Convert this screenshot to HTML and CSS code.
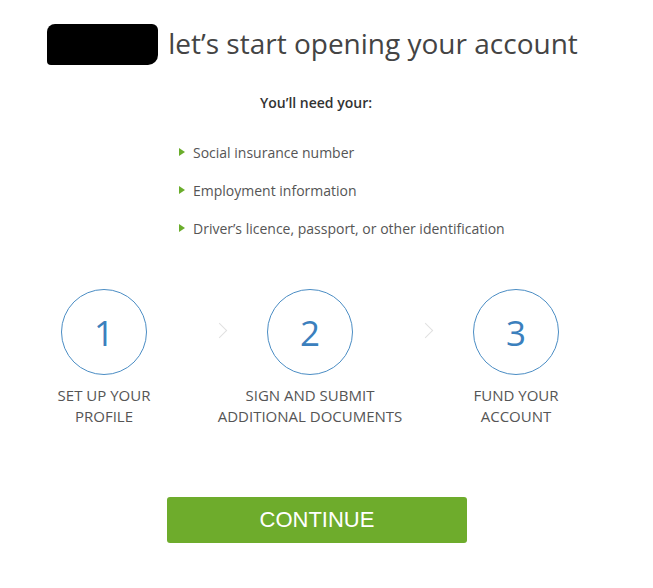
FILE: index.html
```html
<!DOCTYPE html>
<html lang="en">
<head>
  <meta charset="UTF-8" />
  <title>Open your account</title>
  <link rel="stylesheet" href="styles.css">
</head>
<body>

<div class="page">
  <h1 class="title"><span class="redact"></span>let’s start opening your account</h1>

  <p class="intro">You’ll need your:</p>

  <ul class="needs">
    <li>Social insurance number</li>
    <li>Employment information</li>
    <li>Driver’s licence, passport, or other identification</li>
  </ul>

  <div class="steps">
    <div class="step">
      <div class="circle">1</div>
      <div class="label">SET UP YOUR<br>PROFILE</div>
    </div>
    <div class="step">
      <div class="circle">2</div>
      <div class="label">SIGN AND SUBMIT<br>ADDITIONAL DOCUMENTS</div>
    </div>
    <div class="step">
      <div class="circle">3</div>
      <div class="label">FUND YOUR<br>ACCOUNT</div>
    </div>
  </div>

  <div class="actions">
    <button type="button" class="continue">CONTINUE</button>
  </div>
</div>

</body>
</html>
```

FILE: styles.css
```css
body {
  margin: 0;
  font-family: "Open Sans", sans-serif;
  background: #fff;
  color: #555;
}
.page {
  width: 621px;
  padding-top: 23px;
}
.title {
  margin: 0;
  font-size: 28px;
  font-weight: 400;
  line-height: 40px;
  color: #444;
  text-align: center;
  padding-left: 4px;
}
.redact {
  display: inline-block;
  width: 111px;
  height: 41px;
  background: #000;
  border-radius: 8px 6px 10px 4px;
  vertical-align: middle;
  margin: -4px 10px 0 0;
}
.intro {
  margin: 28px 0 0;
  font-size: 14px;
  font-weight: 600;
  line-height: 20px;
  color: #333;
  text-align: center;
  padding-left: 11px;
}
.needs {
  list-style: none;
  margin: 30px 0 0;
  padding: 0 0 0 179px;
}
.needs li {
  position: relative;
  padding-left: 14px;
  font-size: 14px;
  line-height: 20px;
  margin-bottom: 18px;
}
.needs li:last-child {
  margin-bottom: 0;
}
.needs li::before {
  content: "";
  position: absolute;
  left: 0;
  top: 5px;
  border-left: 6px solid #6aad2b;
  border-top: 4.5px solid transparent;
  border-bottom: 4.5px solid transparent;
}
.steps {
  display: grid;
  grid-template-columns: repeat(3, 206px);
  margin-top: 50px;
  padding-left: 1px;
}
.step {
  position: relative;
  display: flex;
  flex-direction: column;
  align-items: center;
}
.step + .step::before {
  content: "";
  position: absolute;
  left: 7px;
  top: 36px;
  width: 10px;
  height: 10px;
  border-top: 1.5px solid #e0e0e0;
  border-right: 1.5px solid #e0e0e0;
  transform: rotate(45deg);
}
.circle {
  width: 84px;
  height: 84px;
  border: 1px solid #4b8dc4;
  border-radius: 50%;
  display: flex;
  align-items: center;
  justify-content: center;
  font-size: 35px;
  font-weight: 400;
  color: #3b80bd;
}
.label {
  margin-top: 10px;
  font-size: 15px;
  line-height: 21px;
  text-align: center;
  color: #555;
}
.actions {
  display: flex;
  justify-content: center;
  margin-top: 70px;
  padding-left: 13px;
}
.continue {
  width: 300px;
  height: 46px;
  border: none;
  border-radius: 3px;
  background: #6eac2c;
  color: #fff;
  font-family: "Liberation Sans", Arial, sans-serif;
  font-size: 22px;
  cursor: pointer;
}
```
